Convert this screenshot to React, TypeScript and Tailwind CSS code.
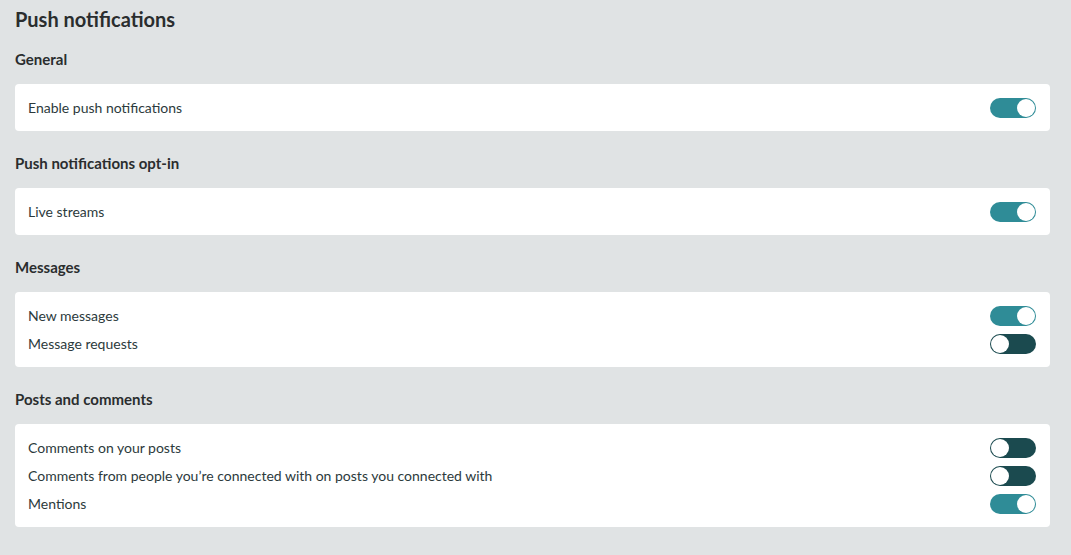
const sections: { title: string; items: { label: string; on: boolean }[] }[] = [
  { title: 'General', items: [{ label: 'Enable push notifications', on: true }] },
  { title: 'Push notifications opt-in', items: [{ label: 'Live streams', on: true }] },
  {
    title: 'Messages',
    items: [
      { label: 'New messages', on: true },
      { label: 'Message requests', on: false },
    ],
  },
  {
    title: 'Posts and comments',
    items: [
      { label: 'Comments on your posts', on: false },
      { label: 'Comments from people you\u2019re connected with on posts you connected with', on: false },
      { label: 'Mentions', on: true },
    ],
  },
]

function Toggle({ on }: { on: boolean }) {
  return (
    <div
      className={
        on
          ? 'flex h-[20px] w-[46px] items-center justify-end rounded-full bg-[#2f8c97] px-px'
          : 'flex h-[20px] w-[46px] items-center justify-start rounded-full bg-[#1b4a4f] px-px'
      }>
      <div className="h-[18px] w-[18px] rounded-full bg-white" />
    </div>
  )
}

export default function App() {
  return (
    <div
      className="min-h-[555px] bg-[#e0e3e4] pt-[8px] pr-[21px] pl-[15px] text-[#2c3a3c]"
      style={{ fontFamily: 'Lato, "Open Sans", sans-serif' }}>
      <h1 className="text-[20px] leading-[22px] font-bold text-[#2a2d2e]">Push notifications</h1>
      {sections.map((s, i) => (
        <div key={s.title} className={i === 0 ? 'mt-[19px]' : 'mt-[22px]'}>
          <h2 className="text-[15px] leading-[20px] font-bold text-[#2a2d2e]">{s.title}</h2>
          <div className="mt-[15px] flex flex-col gap-[7px] rounded-[4px] bg-white py-[13px] pr-[14px] pl-[13px]">
            {s.items.map((it) => (
              <div key={it.label} className="flex h-[21px] items-center justify-between">
                <span className="text-[14px]">{it.label}</span>
                <Toggle on={it.on} />
              </div>
            ))}
          </div>
        </div>
      ))}
    </div>
  )
}
